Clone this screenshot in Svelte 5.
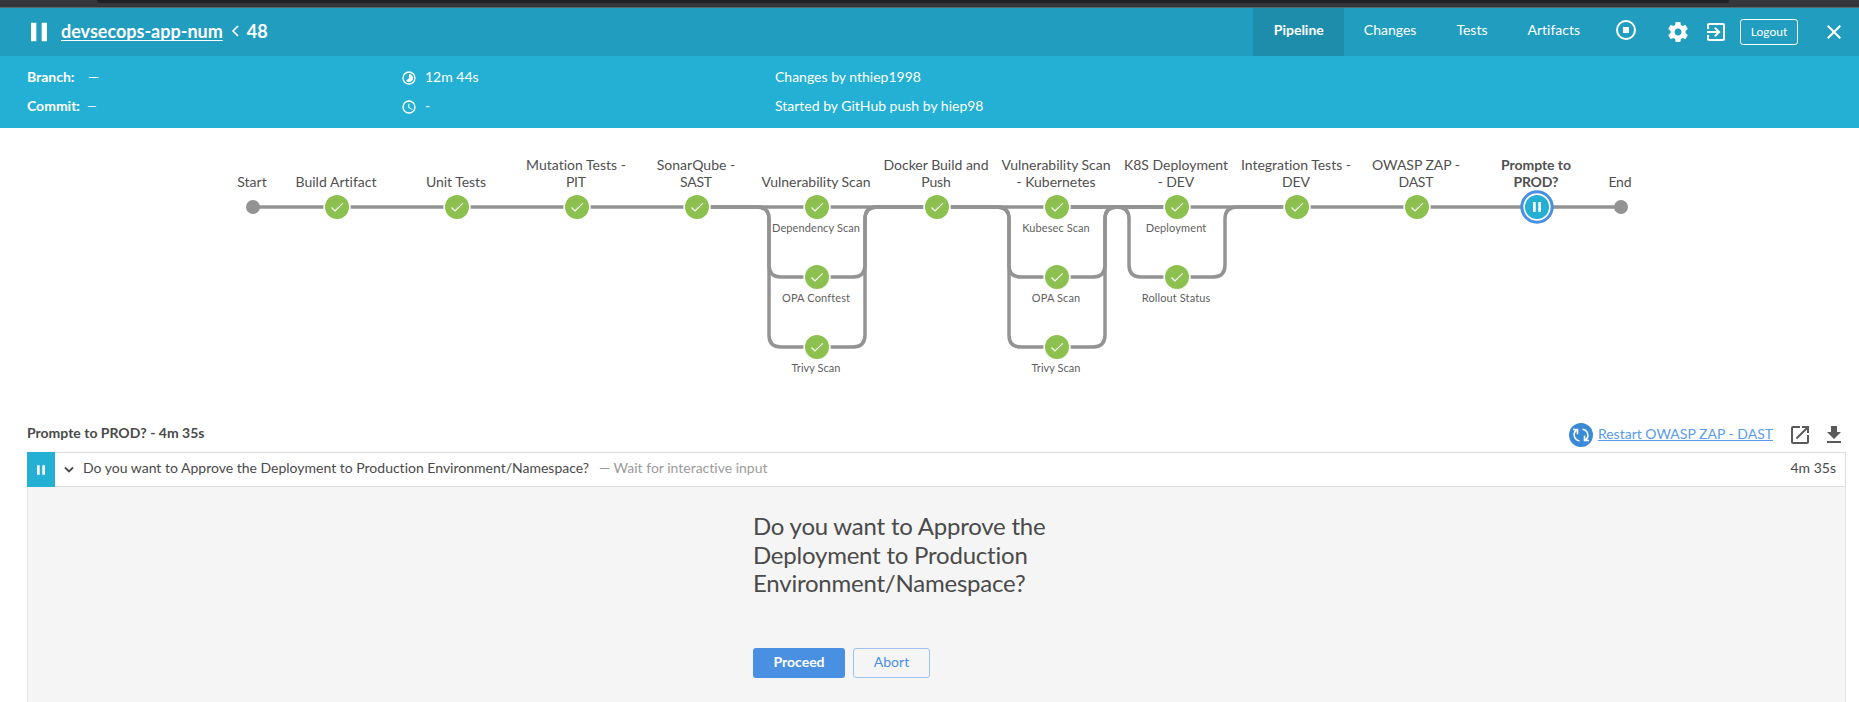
<script>
  const stages = [
    { x: 337, lines: ['Build Artifact'], w: [81] },
    { x: 457, lines: ['Unit Tests'], w: [60] },
    { x: 577, lines: ['Mutation Tests -', 'PIT'], w: [100, 20] },
    { x: 697, lines: ['SonarQube -', 'SAST'], w: [78.5, 32] },
    { x: 817, lines: ['Vulnerability Scan'], w: [109] },
    { x: 937, lines: ['Docker Build and', 'Push'], w: [105, 29.5] },
    { x: 1057, lines: ['Vulnerability Scan', '- Kubernetes'], w: [109, 79] },
    { x: 1177, lines: ['K8S Deployment', '- DEV'], w: [104, 36.5] },
    { x: 1297, lines: ['Integration Tests -', 'DEV'], w: [110, 28] },
    { x: 1417, lines: ['OWASP ZAP -', 'DAST'], w: [88, 35] },
    { x: 1537, lines: ['Prompte to', 'PROD?'], w: [70, 45], paused: true }
  ];
  stages[4].jobs = ['Dependency Scan', 'OPA Conftest', 'Trivy Scan'];
  stages[4].jw = [88, 68, 49];
  stages[6].jobs = ['Kubesec Scan', 'OPA Scan', 'Trivy Scan'];
  stages[6].jw = [67.5, 48.5, 49];
  stages[7].jobs = ['Deployment', 'Rollout Status'];
  stages[7].jw = [60.5, 68.5];
  const top = 79;
  const loops = stages.filter((s) => s.jobs);
  const branch = (x, row) => {
    const y = top + row * 70;
    return `M${x - 106} ${top}H${x - 60}q12 0 12 12V${y - 12}q0 12 12 12H${x + 36}q12 0 12-12V${top + 12}q0-12 12-12H${x + 106}`;
  };
</script>

<div class="page">
  <div class="chrome"><div class="omnibox"></div></div>

  <header>
    <svg class="pause" width="32" height="32" viewBox="0 0 24 24"><path d="M6 19h4V5H6zM14 5v14h4V5z" /></svg>
    <h1><a href="#pipeline">devsecops-app-num</a><svg width="9" height="14" viewBox="0 0 9 14"><path d="M7 2 2 7l5 5" fill="none" stroke="#fff" stroke-width="1.7" /></svg><span>48</span></h1>
    <nav>
      <a href="#p" class="on">Pipeline</a><a href="#c">Changes</a><a href="#t">Tests</a><a href="#a">Artifacts</a>
    </nav>
    <div class="tools">
      <svg class="stop" width="24" height="24" viewBox="0 0 24 24"><circle cx="12" cy="12" r="9" fill="none" stroke="#fff" stroke-width="2" /><path d="M9 9h6v6H9z" /></svg>
      <svg class="gear" width="24" height="24" viewBox="0 0 24 24"><path d="M19.43 12.98c.04-.32.07-.64.07-.98s-.03-.66-.07-.98l2.11-1.65c.19-.15.24-.42.12-.64l-2-3.46c-.12-.22-.39-.3-.61-.22l-2.49 1c-.52-.4-1.08-.73-1.69-.98l-.38-2.65C14.46 2.18 14.25 2 14 2h-4c-.25 0-.46.18-.49.42l-.38 2.65c-.61.25-1.17.59-1.69.98l-2.49-1c-.23-.09-.49 0-.61.22l-2 3.46c-.13.22-.07.49.12.64l2.11 1.65c-.04.32-.07.65-.07.98s.03.66.07.98l-2.11 1.65c-.19.15-.24.42-.12.64l2 3.46c.12.22.39.3.61.22l2.49-1c.52.4 1.08.73 1.69.98l.38 2.65c.03.24.24.42.49.42h4c.25 0 .46-.18.49-.42l.38-2.65c.61-.25 1.17-.59 1.69-.98l2.49 1c.23.09.49 0 .61-.22l2-3.46c.12-.22.07-.49-.12-.64l-2.11-1.65zM12 15.5c-1.93 0-3.5-1.57-3.5-3.5s1.570-3.5 3.500-3.500 3.500 1.570 3.500 3.500-1.570 3.500-3.500 3.500z" /></svg>
      <svg class="exit" width="24" height="24" viewBox="0 0 24 24"><path d="M10.090 15.590 11.500 17l5-5-5-5-1.410 1.410L12.670 11H3v2h9.670l-2.580 2.590zM19 3H5c-1.110 0-2 .9-2 2v4h2V5h14v14H5v-4H3v4c0 1.100.89 2 2 2h14c1.100 0 2-.9 2-2V5c0-1.100-.9-2-2-2z" /></svg>
      <button class="logout">Logout</button>
      <svg class="close" width="24" height="24" viewBox="0 0 24 24"><path d="M19 6.410 17.590 5 12 10.590 6.410 5 5 6.410 10.590 12 5 17.590 6.410 19 12 13.410 17.590 19 19 17.590 13.410 12z" /></svg>
    </div>
  </header>

  <section class="meta">
    <div class="cell"><b>Branch:</b><span class="dash">—</span></div>
    <div class="cell"><svg width="16" height="16" viewBox="0 0 24 24"><path d="M16.240 7.750A5.970 5.970 0 0 0 12 6v6l-4.240 4.240a6 6 0 0 0 8.480 0 6 6 0 0 0 0-8.490zM12 2a10 10 0 1 0 0 20 10 10 0 0 0 0-20zm0 18a8 8 0 1 1 0-16 8 8 0 0 1 0 16z" /></svg><span>12m 44s</span></div>
    <div class="cell">Changes by nthiep1998</div>
    <div class="cell"><b>Commit:</b><span class="dash small-dash">—</span></div>
    <div class="cell"><svg width="16" height="16" viewBox="0 0 24 24"><path d="M12 2a10 10 0 1 0 0 20 10 10 0 0 0 0-20zm0 18a8 8 0 1 1 0-16 8 8 0 0 1 0 16zM12.500 7H11v6l5.250 3.150.75-1.230-4.500-2.670z" /></svg><span>-</span></div>
    <div class="cell">Started by GitHub push by hiep98</div>
  </section>

  <svg class="graph" width="1859" height="280" viewBox="0 0 1859 280">
    <g fill="none" stroke="#949393" stroke-width="3.5">
      <path d="M253 {top}H1621" />
      <path d="M1057 {top}H1177" />
      {#each loops as s}
        {#each s.jobs.slice(1) as _, i}
          <path d={branch(s.x, i + 1)} />
        {/each}
      {/each}
    </g>
    <circle cx="253" cy={top} r="7" fill="#949393" />
    <circle cx="1621" cy={top} r="7" fill="#949393" />
    <g class="big">
      <text x="252" y="59" textLength="29.500">Start</text>
      <text x="1620" y="59" textLength="23">End</text>
    </g>
    {#each stages as s}
      <g class="big" class:bold={s.paused}>
        {#each s.lines as line, i}
          <text x={s.x - 1} y={59 - (s.lines.length - 1 - i) * 17} textLength={s.w[i]}>{line}</text>
        {/each}
      </g>
      {#if s.paused}
        <circle cx={s.x} cy={top} r="15.200" fill="#fff" stroke="#4a90e2" stroke-width="3" />
        <circle cx={s.x} cy={top} r="12" fill="#24b0d5" />
        <path d="M{s.x - 4} {top - 5}h2.700v10h-2.700zM{s.x + 1.300} {top - 5}h2.700v10h-2.700z" fill="#fff" />
      {:else}
        {#each s.jobs ?? [''] as job, i}
          <circle cx={s.x} cy={top + i * 70} r="13.700" fill="#fff" />
          <circle cx={s.x} cy={top + i * 70} r="12" fill="#8cc04f" />
          <path d="M{s.x - 5.500} {top + i * 70 + 0.500}l3.500 3.500 7.700-7.700" fill="none" stroke="#fff" stroke-width="1.200" />
          {#if job}
            <text class="small" x={s.x - 1} y={104 + i * 70} textLength={s.jw[i]}>{job}</text>
          {/if}
        {/each}
      {/if}
    {/each}
  </svg>

  <main>
    <div class="bar">
      <h2>Prompte to PROD? - 4m 35s</h2>
      <a class="restart" href="#r">
        <svg width="24" height="24" viewBox="0 0 24 24"><circle cx="12" cy="12" r="12" fill="#3a8ad6" /><path d="M10.500 17.700A6 6 0 0 1 7.500 7M4 6.500h4.500v4.800M13.500 6.300a6 6 0 0 1 3 10.700M20 17.500h-4.500v-4.800" fill="none" stroke="#fff" stroke-width="1.600" /></svg>
        <span>Restart OWASP ZAP - DAST</span>
      </a>
      <svg class="open" width="24" height="24" viewBox="0 0 24 24"><path d="M19 19H5V5h7V3H5a2 2 0 0 0-2 2v14a2 2 0 0 0 2 2h14c1.100 0 2-.9 2-2v-7h-2v7zM14 3v2h3.590l-9.830 9.830 1.410 1.410L19 6.410V10h2V3h-7z" /></svg>
      <svg class="down" width="24" height="24" viewBox="0 0 24 24"><path d="M19 9h-4V3H9v6H5l7 7 7-7zM5 18v2h14v-2H5z" /></svg>
    </div>
    <div class="step">
      <div class="status"><svg width="16" height="16" viewBox="0 0 24 24"><path d="M6 19h4V5H6zM14 5v14h4V5z" /></svg></div>
      <svg class="chev" width="10" height="8" viewBox="0 0 10 8"><path d="M1 1.500 5 5.500l4-4" fill="none" stroke="#4a4a4a" stroke-width="1.800" /></svg>
      <span class="q">Do you want to Approve the Deployment to Production Environment/Namespace?</span>
      <span class="hint">— Wait for interactive input</span>
      <span class="time">4m 35s</span>
    </div>
    <div class="panel">
      <div class="dialog">
        <h3>Do you want to Approve the Deployment to Production Environment/Namespace?</h3>
        <div class="actions"><button class="go">Proceed</button><button class="no">Abort</button></div>
      </div>
    </div>
  </main>
</div>

<style>
  :global(body) { margin: 0; background: #fff; }
  .page { width: 1859px; height: 702px; overflow: hidden; display: flex; flex-direction: column; font: 14px/20px Lato, sans-serif; font-variant-ligatures: none; color: #4a4a4a; }
  svg { display: block; flex: none; }
  h1, h2, h3 { margin: 0; }
  button { font-family: inherit; box-sizing: border-box; padding: 0; border-radius: 3px; }
  .chrome { flex: none; height: 7px; background: #35363a; border-bottom: 1px solid #5b6468; }
  .omnibox { height: 3px; margin: 0 130px 0 97px; background: #202124; border-radius: 0 0 6px 6px; }

  header { flex: none; height: 48px; background: #209dbf; color: #fff; fill: #fff; display: flex; align-items: center; }
  .pause { margin-left: 23px; }
  h1 { display: flex; align-items: center; margin: -3px 0 0 6px; font-size: 18px; line-height: 24px; font-weight: 700; }
  h1 a { color: #fff; text-underline-offset: 2px; text-decoration-thickness: 1px; text-decoration-skip-ink: none; }
  h1 svg { margin: 1px 7px 0 8px; }
  nav { display: flex; height: 48px; margin-left: auto; }
  nav a { box-sizing: border-box; color: #fff; text-decoration: none; padding: 12px 20px 0; }
  nav .on { background: #1e8cab; font-weight: 700; padding-left: 21px; }
  .tools { display: flex; align-items: center; width: 259px; }
  .stop { margin: -4px 0 0 14px; }
  .gear { margin-left: 28px; }
  .exit { margin-left: 14px; }
  .logout { margin: 0 24px 0 12px; width: 58px; height: 26px; padding-bottom: 1px; border: 1px solid #fff; color: #fff; background: none; font-size: 12px; }

  .meta { flex: none; box-sizing: border-box; height: 72px; padding: 6px 27px 8px; display: grid; grid-template-columns: 374px 374px 1fr; grid-template-rows: 29px 29px; align-items: center; background: #24b0d5; color: #fff; fill: #fff; }
  .cell { display: flex; align-items: center; }
  .cell svg { margin: 2px 8px 0 0; }
  .cell b { width: 61px; }
  .small-dash { font-size: 12px; margin-left: -1px; }

  .graph { height: 280px; }
  .big { font-size: 14px; fill: #505050; }
  .bold { font-weight: 700; }
  .small { font-size: 11px; fill: #5f5f5f; }
  text { text-anchor: middle; }

  main { flex: 1; display: flex; flex-direction: column; padding: 0 13px 0 27px; }
  .bar { height: 44px; display: flex; align-items: center; fill: #5a5a5a; }
  h2 { font-size: 14px; line-height: 20px; margin-right: auto; margin-top: 6px; }
  .restart { display: flex; align-items: center; color: #5a9bea; margin-top: 10px; }
  .restart span { margin: -3px 0 0 5px; }
  .open { margin: 10px 0 0 15px; }
  .down { margin: 10px 0 0 10px; }
  .step { box-sizing: border-box; height: 35px; flex: none; display: flex; align-items: center; border: 1px solid #dedede; border-left: 0; }
  .status { width: 28px; height: 35px; background: #24b0d5; fill: #fff; display: flex; align-items: center; justify-content: center; }
  .chev { margin: 1px 9px 0 9px; }
  .q, .hint, .time { margin-top: -4px; }
  .hint { color: #9b9b9b; margin-left: 10px; }
  .time { margin-left: auto; margin-right: 9px; }
  .panel { flex: 1; background: #f5f5f5; border: solid #e6e6e6; border-width: 0 1px; }
  .dialog { width: 352px; margin: 25px 0 0 725px; }
  h3 { font-weight: 400; font-size: 24px; line-height: 28.600px; letter-spacing: -0.220px; }
  .actions { display: flex; gap: 8px; margin-top: 50.600px; }
  .actions button { height: 30px; font-size: 14px; padding-bottom: 3px; }
  .go { width: 92px; border: 0; background: #4a90e2; color: #fff; font-weight: 700; }
  .no { width: 77px; border: 1px solid #9dc2ee; background: none; color: #4a90e2; }
</style>
